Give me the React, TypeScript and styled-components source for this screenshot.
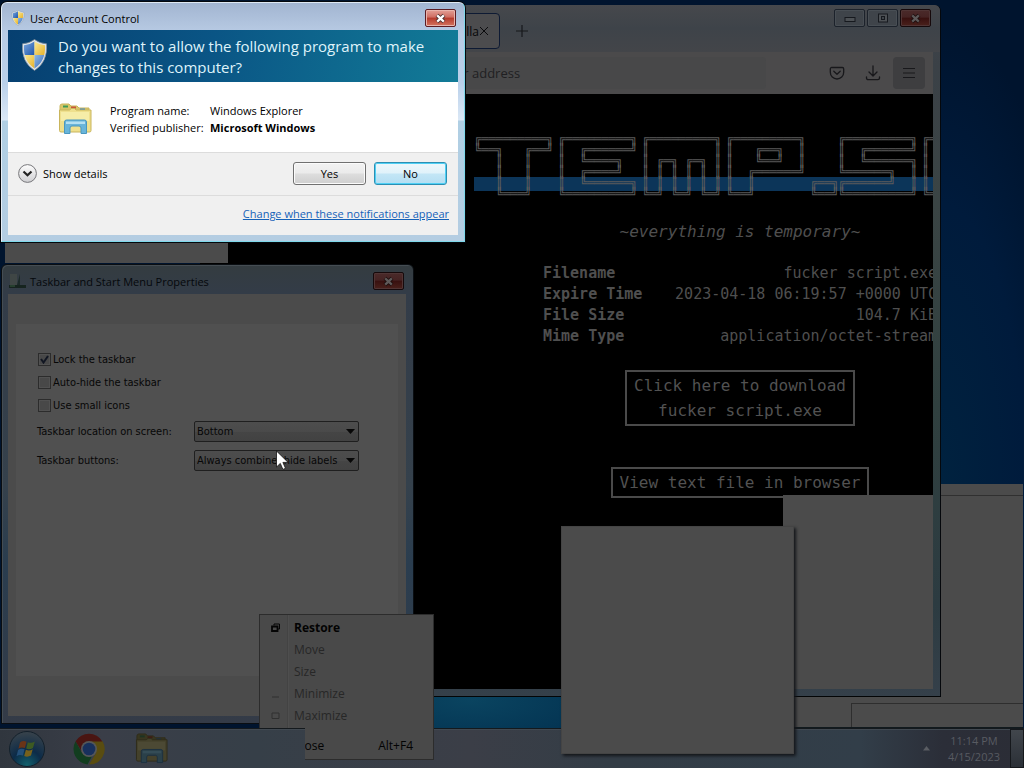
import React from "react";
import styled, { createGlobalStyle, css } from "styled-components";

const ui = `"Open Sans", "Noto Sans", sans-serif`;
const dialogFont = `"DejaVu Sans Condensed", "DejaVu Sans", sans-serif`;
const mono = `"DejaVu Sans Mono", "Liberation Mono", monospace`;

const GlobalStyle = createGlobalStyle`
  * { box-sizing: border-box; }
  body { margin: 0; background: #000; font-family: ${ui}; font-size: 11px; color: #000; }
  button, select, input { font: inherit; margin: 0; padding: 0; }
`;

const Desktop = styled.div`
  position: relative;
  display: flex;
  flex-direction: column;
  justify-content: flex-end;
  min-height: 100vh;
  overflow: hidden;
  background:
    radial-gradient(ellipse 180px 60px at 470px 700px, #0a4460, #02304f 90%, transparent) no-repeat,
    radial-gradient(ellipse 140px 460px at 940px 480px, #00223f, #001b3c 60%, transparent) no-repeat,
    #00142e;
`;

/* ---------- shared window parts ---------- */

const CaptionButton = styled.button<{ $tone: "live" | "dim" | "plain" }>`
  display: grid;
  place-items: center;
  width: 31px;
  height: 18px;
  border-radius: 2px;
  ${(p) =>
    p.$tone === "live" &&
    css`
      border: 1px solid #5c1c22;
      background: linear-gradient(#e3a097, #cf6d62 45%, #b43a2c 50%, #d4745f);
      box-shadow: inset 0 0 0 1px #e8b4ac;
    `}
  ${(p) =>
    p.$tone === "dim" &&
    css`
      border: 1px solid #16090b;
      background: linear-gradient(#4a2a2a, #452323 45%, #38100f 50%, #4a211c);
      box-shadow: inset 0 0 0 1px #503434;
    `}
  ${(p) =>
    p.$tone === "plain" &&
    css`
      border: 1px solid #1c222b;
      background: #3f444a;
      box-shadow: inset 0 0 0 1px #484e54;
    `}
`;

const CloseGlyph = ({ fill, edge }: { fill: string; edge: string }) => (
  <svg width="13" height="11" viewBox="0 0 13 11" aria-hidden="true">
    <path d="M3 2.2 10 8.8M10 2.2 3 8.8" stroke={edge} strokeWidth="4" />
    <path d="M3.2 2.4 9.8 8.6M9.8 2.4 3.2 8.6" stroke={fill} strokeWidth="2.2" />
  </svg>
);

/* ---------- background window on the right ---------- */

const BackWindow = styled.div`
  position: absolute;
  top: 484px;
  left: 700px;
  right: 1px;
  height: 244px;
  display: flex;
  flex-direction: column;
  background: #4b4b4b;
  border-bottom: 1px solid #111a1e;
`;
const BackToolbar = styled.div`
  height: 12px;
  border-bottom: 1px solid #303030;
`;
const BackFill = styled.div`
  flex: 1;
`;
const BackStatus = styled.div`
  height: 24px;
  margin-left: 151px;
  border: 1px solid #2e2e2e;
  border-width: 1px 0 0 1px;
`;

/* ---------- browser ---------- */

const Browser = styled.section`
  position: absolute;
  top: 5px;
  left: 200px;
  width: 741px;
  height: 692px;
  display: flex;
  flex-direction: column;
  padding: 0 7px 7px 0;
  border-radius: 0 6px 0 0;
  border-right: 1px solid #05080c;
  border-bottom: 1px solid #030506;
  background: linear-gradient(#41444a 0, #3b4147 60px, #3a4444 200px, #30403f 400px, #2c3b41 600px, #35404a 100%);
`;
const TabStrip = styled.div`
  display: flex;
  align-items: flex-start;
  height: 47px;
  margin-right: -7px;
  padding: 4px 9px 0 60px;
  border-radius: 0 6px 0 0;
  background: linear-gradient(#46484c, #3e4349 50%, #434549);
`;
const Tab = styled.div`
  display: flex;
  align-items: center;
  justify-content: flex-end;
  width: 240px;
  height: 36px;
  margin-top: 4px;
  padding-right: 10px;
  border: 1px solid #0e1a33;
  border-radius: 4px;
  background: #4c4c4e;
  font-size: 12px;
  color: #070709;
`;
const GhostButton = styled.button<{ $active?: boolean }>`
  display: grid;
  place-items: center;
  width: 32px;
  height: 32px;
  border: 0;
  border-radius: 4px;
  background: ${(p) => (p.$active ? "#3e3e40" : "transparent")};
`;
const TabClose = styled.button`
  display: grid;
  place-items: center;
  width: 10px;
  height: 16px;
  border: 0;
  background: none;
`;
const NewTab = styled(GhostButton)`
  margin: 6px 0 0 6px;
`;
const Captions = styled.div`
  display: flex;
  gap: 2px;
  margin-left: auto;
`;
const NavBar = styled.div`
  display: flex;
  align-items: center;
  gap: 4px;
  height: 42px;
  padding-right: 8px;
  background: #4b4a4b;
`;
const Address = styled.input`
  width: 566px;
  height: 32px;
  margin-right: auto;
  padding-left: 175px;
  border: 0;
  border-radius: 4px;
  background: #484849;
  font-size: 13px;
  color: #202022;
  &::placeholder {
    color: #202022;
    opacity: 1;
  }
`;
const Viewport = styled.div`
  position: relative;
  flex: 1;
  overflow: hidden;
  background: #000;
`;
const Page = styled.main`
  display: flex;
  flex-direction: column;
  align-items: center;
  width: 532px;
  margin-left: 274px;
  padding-top: 40px;
  font-family: ${mono};
  color: #4f4f4f;
`;
const Logo = styled.div`
  display: grid;
  grid-template-columns: repeat(4, 84px) 28px 84px 84px;
  align-self: stretch;
  background: linear-gradient(#0c3559, #0c3559) 0 43px / 100% 14px no-repeat;
`;
const LogoLetter = styled.pre`
  margin: 0;
  font-family: ${mono};
  font-size: 12px;
  line-height: 11px;
  color: #5c5c5c;
`;
const Tagline = styled.p`
  margin: 20px 0 19px;
  font-size: 16px;
  font-style: italic;
  line-height: 24px;
`;
const Details = styled.table`
  width: 394px;
  border-collapse: collapse;
  font-size: 15px;
  line-height: 21px;
  th {
    padding: 0;
    text-align: left;
    white-space: nowrap;
  }
  td {
    padding: 0;
    text-align: right;
    white-space: nowrap;
  }
`;
const PageButton = styled.button`
  margin-top: 23px;
  padding: 1px 7px;
  border: 2px solid #4a4a4a;
  background: #000;
  color: #525252;
  font-size: 16px;
  line-height: 25px;
  & + & {
    margin-top: 41px;
  }
`;
const GreyPane = styled.div`
  position: absolute;
  right: 0;
  bottom: 0;
  width: 150px;
  height: 194px;
  background: #4b4b4b;
`;

const LOGO = [
  ["╔═════════╗", "╚══╗   ╔══╝", "   ║   ║", "   ║   ║", "   ║   ║", "   ╚═══╝"],
  ["╔═════════╗", "║  ╔══════╝", "║  ╚════╗", "║  ╔════╝", "║  ╚══════╗", "╚═════════╝"],
  ["╔═════════╗", "║         ║", "║ ╔═╗ ╔═╗ ║", "║ ║ ║ ║ ║ ║", "║ ║ ║ ║ ║ ║", "╚═╝ ╚═╝ ╚═╝"],
  ["╔═════════╗", "║   ╔══╗  ║", "║   ╚══╝  ║", "║  ╔══════╝", "║  ║", "╚══╝"],
  ["", "", "", "", "╔══╗", "╚══╝"],
  ["╔═════════╗", "║  ╔══════╝", "║  ╚══════╗", "╚══════╗  ║", "╔══════╝  ║", "╚═════════╝"],
  ["╔══╗   ╔══╗", "║  ║   ║  ║", "║  ╚═══╝  ║", "║  ╔═══╗  ║", "║  ║   ║  ║", "╚══╝   ╚══╝"],
];

const DETAILS = [
  ["Filename", "fucker script.exe"],
  ["Expire Time", "2023-04-18 06:19:57 +0000 UTC"],
  ["File Size", "104.7 KiB"],
  ["Mime Type", "application/octet-stream"],
];

const BrowserWindow = () => (
  <Browser>
    <TabStrip>
      <Tab>
        Mozilla
        <TabClose aria-label="Close tab">
          <svg width="10" height="10" viewBox="0 0 10 10">
            <path d="M1 1l8 8M9 1l-8 8" stroke="#0b0b0d" />
          </svg>
        </TabClose>
      </Tab>
      <NewTab aria-label="New tab">
        <svg width="12" height="12" viewBox="0 0 12 12">
          <path d="M6 0v12M0 6h12" stroke="#17181b" strokeWidth="1.2" />
        </svg>
      </NewTab>
      <Captions>
        <CaptionButton $tone="plain" aria-label="Minimize">
          <svg width="12" height="10" viewBox="0 0 12 10">
            <rect x="1" y="4.5" width="10" height="4" fill="#4d5155" stroke="#16191e" />
          </svg>
        </CaptionButton>
        <CaptionButton $tone="plain" aria-label="Maximize">
          <svg width="12" height="10" viewBox="0 0 12 10">
            <rect x="1.5" y="1" width="9" height="8" fill="#4d5155" stroke="#16191e" />
            <rect x="4.5" y="3.5" width="3" height="3" fill="#3f444a" stroke="#16191e" />
          </svg>
        </CaptionButton>
        <CaptionButton $tone="dim" aria-label="Close">
          <CloseGlyph fill="#5c5858" edge="#1d0e0e" />
        </CaptionButton>
      </Captions>
    </TabStrip>
    <NavBar>
      <Address aria-label="Address" placeholder="Search or enter address" />
      <GhostButton aria-label="Save to Pocket">
        <svg width="16" height="16" viewBox="0 0 16 16" fill="none" stroke="#18181b" strokeWidth="1.3">
          <path d="M2.7 2.5h10.6a1.4 1.4 0 0 1 1.4 1.4v3.4a6.7 6.7 0 0 1-13.4 0V3.900A1.400 1.400 0 0 1 2.700 2.500z" />
          <path d="M4.800 6.300 8 9.300l3.200-3" strokeLinecap="round" strokeLinejoin="round" />
        </svg>
      </GhostButton>
      <GhostButton aria-label="Downloads">
        <svg width="16" height="16" viewBox="0 0 16 16" fill="none" stroke="#18181b" strokeWidth="1.3" strokeLinecap="round" strokeLinejoin="round">
          <path d="M8 1v9.500M4 7l4 4 4-4M1.500 12v1a1.700 1.700 0 0 0 1.700 1.700h9.600a1.700 1.700 0 0 0 1.700-1.700v-1" />
        </svg>
      </GhostButton>
      <GhostButton $active aria-label="Menu">
        <svg width="14" height="14" viewBox="0 0 14 14" stroke="#18181b">
          <path d="M1 2.500h12M1 7h12M1 11.500h12" />
        </svg>
      </GhostButton>
    </NavBar>
    <Viewport>
      <Page>
        <Logo>
          {LOGO.map((rows, i) => (
            <LogoLetter key={i}>{rows.join("\n")}</LogoLetter>
          ))}
        </Logo>
        <Tagline>~everything is temporary~</Tagline>
        <Details>
          <tbody>
            {DETAILS.map(([name, value]) => (
              <tr key={name}>
                <th scope="row">{name}</th>
                <td>{value}</td>
              </tr>
            ))}
          </tbody>
        </Details>
        <PageButton>
          Click here to download
          <br />
          fucker script.exe
        </PageButton>
        <PageButton>View text file in browser</PageButton>
      </Page>
      <GreyPane />
    </Viewport>
  </Browser>
);

/* ---------- leftover panels ---------- */

const Strip = styled.div`
  position: absolute;
  top: 240px;
  left: 5px;
  width: 223px;
  height: 23px;
  background: #4b4b4b;
`;
const BlankPopup = styled.div`
  position: absolute;
  top: 526px;
  left: 561px;
  width: 233px;
  height: 228px;
  border: 1px solid #444;
  background: #4b4b4b;
  box-shadow: 2px 2px 3px #14161a;
`;

/* ---------- taskbar properties ---------- */

const Properties = styled.section`
  position: absolute;
  top: 264px;
  left: 1px;
  width: 413px;
  height: 460px;
  display: flex;
  flex-direction: column;
  padding: 0 7px 7px 6px;
  border: 1px solid #0a0e12;
  border-radius: 6px 6px 0 0;
  background: linear-gradient(#343c40, #333c48 30px, #35414c 220px, #2a3d4f 300px, #343b47);
  box-shadow: inset 1px 1px 0 #454d53;
  font-family: ${dialogFont};
  color: #070707;
`;
const PropTitle = styled.header`
  display: flex;
  align-items: center;
  gap: 4px;
  height: 29px;
  padding: 3px 2px 0 1px;
  font-family: ${ui};
  color: #05080c;
  button {
    margin-left: auto;
  }
`;
const PropBody = styled.div`
  flex: 1;
  display: flex;
  padding: 30px 8px 40px;
  background: #4b4b4b;
`;
const PropPanel = styled.form`
  flex: 1;
  padding: 24px 21px;
  background: #505050;
`;
const CheckRow = styled.label`
  display: flex;
  align-items: center;
  gap: 2px;
  height: 23px;
  padding-left: 1px;
`;
const Check = styled.input`
  appearance: none;
  width: 13px;
  height: 13px;
  border: 1px solid #2c2c2c;
  background: #484848;
  box-shadow: inset 0 0 0 1px #515151;
  &:checked {
    background: url("data:image/svg+xml,%3Csvg xmlns='http://www.w3.org/2000/svg' viewBox='0 0 11 11'%3E%3Cpath d='M2 5l2.500 3.500L9 2' fill='none' stroke='%23111622' stroke-width='2'/%3E%3C/svg%3E")
      #484848;
  }
`;
const SelectRow = styled.div`
  display: flex;
  align-items: center;
  height: 29px;
  label {
    width: 157px;
  }
`;
const SelectBox = styled.div`
  position: relative;
  display: flex;
  width: 165px;
  svg {
    position: absolute;
    top: 8px;
    right: 4px;
    pointer-events: none;
  }
`;
const Select = styled.select`
  appearance: none;
  width: 100%;
  height: 21px;
  padding-left: 2px;
  border: 1px solid #1f1f1f;
  border-radius: 2px;
  background: linear-gradient(#4d4d4d, #4a4a4a 50%, #454545 52%, #424242);
  color: #070707;
`;

const LabelledSelect = ({ id, label, value }: { id: string; label: string; value: string }) => (
  <SelectRow>
    <label htmlFor={id}>{label}</label>
    <SelectBox>
      <Select id={id}>
        <option>{value}</option>
      </Select>
      <svg width="9" height="5" viewBox="0 0 9 5">
        <path d="M0 0h9L4.500 5z" fill="#070707" />
      </svg>
    </SelectBox>
  </SelectRow>
);

const PropertiesWindow = () => (
  <Properties>
    <PropTitle>
      <svg width="17" height="16" viewBox="0 0 17 16" aria-hidden="true">
        <path d="M1 1h7v11H1z" fill="#3f4645" />
        <path d="M8 12 11 1v11z" fill="#1c2a29" />
        <path d="M0 12h17v3H0z" fill="#16241f" />
        <path d="M1 12h5v2H1z" fill="#27402f" />
      </svg>
      Taskbar and Start Menu Properties
      <CaptionButton $tone="dim" aria-label="Close">
        <CloseGlyph fill="#5f5a5a" edge="#1d0e0e" />
      </CaptionButton>
    </PropTitle>
    <PropBody>
      <PropPanel>
        <CheckRow>
          <Check type="checkbox" defaultChecked />
          Lock the taskbar
        </CheckRow>
        <CheckRow>
          <Check type="checkbox" />
          Auto-hide the taskbar
        </CheckRow>
        <CheckRow>
          <Check type="checkbox" />
          Use small icons
        </CheckRow>
        <LabelledSelect id="location" label="Taskbar location on screen:" value="Bottom" />
        <LabelledSelect id="buttons" label="Taskbar buttons:" value="Always combine, hide labels" />
      </PropPanel>
    </PropBody>
  </Properties>
);

/* ---------- taskbar ---------- */

const Taskbar = styled.footer`
  position: relative;
  display: flex;
  align-items: center;
  height: 40px;
  border-top: 1px solid #14191d;
  box-shadow: inset 0 1px 0 #414951;
  background: linear-gradient(90deg, #30363e, #3a3e48 10%, #363f48 25%, #3b3e47 46%, #333d46 60%, #323e49 84%, #2b2e38 92%, #2b2d36);
`;
const TaskButton = styled.button`
  display: grid;
  place-items: center;
  width: 62px;
  height: 38px;
  border: 0;
  background: none;
  &:first-child {
    width: 54px;
    margin-right: 4px;
  }
`;
const Tray = styled.div`
  display: flex;
  align-items: center;
  gap: 14px;
  height: 100%;
  margin-left: auto;
`;
const Clock = styled.time`
  width: 60px;
  text-align: center;
  line-height: 16px;
  color: #585b62;
`;
const ShowDesktop = styled.button`
  width: 14px;
  height: 100%;
  margin-left: -8px;
  border: 1px solid #15181c;
  background: linear-gradient(#41464c, #2b3037);
`;

const FolderIcon = ({ size, dim }: { size: number; dim?: boolean }) => {
  const c = dim
    ? { back: "#38361f", mid: "#44412b", front: "#4c4934", edge: "#2f2c1b", stand: "#2a4049", hi: "#344c56" }
    : { back: "#d9c76a", mid: "#efe08d", front: "#f6eda8", edge: "#c9b55c", stand: "#69b5da", hi: "#b4e0f2" };
  return (
    <svg width={size} height={size} viewBox="0 0 34 34" aria-hidden="true">
      <path d="M2 4q0-2 2-2h7l2 2h6l2 2h10v4H2z" fill={c.back} stroke={c.edge} />
      <path d="M5 3.500h5v2H5z" fill={dim ? "#1d3322" : "#3c9a55"} />
      <path d="M13 4.500h5v2h-5z" fill={dim ? "#3f1c14" : "#c8573a"} />
      <path d="M22 6.500h5v2h-5z" fill={dim ? "#1c2f42" : "#3f86c8"} />
      <path d="M1.500 8h10l2-1.500h3L18 8h15v20.500q0 1.500-1.500 1.500H3q-1.500 0-1.500-1.500z" fill={c.mid} stroke={c.edge} />
      <path d="M3 10h28v9H3z" fill={c.front} />
      <path d="M6.500 20q0-2 2-2h18q2 0 2 2v11.500h-5.500V26q0-2-2-2h-7q-2 0-2 2v5.500H6.500z" fill={c.stand} stroke={dim ? "#1d3140" : "#4a97bf"} />
      <path d="M8 19.500h19v2.500H8z" fill={c.hi} />
    </svg>
  );
};

const TaskbarView = () => (
  <Taskbar>
    <TaskButton aria-label="Start">
      <svg width="38" height="38" viewBox="0 0 38 38">
        <defs>
          <radialGradient id="orb" cx=".5" cy=".95" r=".95">
            <stop offset="0" stopColor="#12606c" />
            <stop offset=".45" stopColor="#0c2b48" />
            <stop offset="1" stopColor="#39434b" />
          </radialGradient>
        </defs>
        <circle cx="19" cy="19" r="17.500" fill="url(#orb)" stroke="#13202b" />
        <path d="M12 12.500q3-2.500 6.500-.8l-1.600 6.400q-3.300-1.600-6.500.6z" fill="#6a3417" />
        <path d="M19.800 12.200q3.400 1.500 7-.6l-1.800 6.400q-3.400 2-6.800.6z" fill="#3d5a22" />
        <path d="M10.100 20q3-2.300 6.500-.7l-1.700 6.300q-3.200-1.500-6.400.6z" fill="#234f78" />
        <path d="M17.900 19.700q3.400 1.600 6.800-.5L23 25.600q-3.500 2-6.800.5z" fill="#77611c" />
      </svg>
    </TaskButton>
    <TaskButton aria-label="Google Chrome">
      <svg width="32" height="32" viewBox="0 0 32 32">
        <path d="M16 8h13.400A15.500 15.500 0 0 1 16 31.500L23 20z" fill="#594c10" />
        <path d="M2.600 8.200 9.100 20 16 23.500l3-.3-4.500 8.200A15.500 15.500 0 0 1 2.600 8.200z" fill="#123d1f" />
        <path d="M16 8.500h13.300A15.500 15.500 0 0 0 2.600 8.200L9 19z" fill="#4a1512" />
        <circle cx="16" cy="16" r="8" fill="#555759" />
        <circle cx="16" cy="16" r="6.300" fill="#18305c" />
      </svg>
    </TaskButton>
    <TaskButton aria-label="Windows Explorer">
      <FolderIcon size={33} dim />
    </TaskButton>
    <Tray>
      <svg width="7" height="5" viewBox="0 0 7 5" aria-hidden="true">
        <path d="M3.500 0 7 4.500H0z" fill="#5a5d63" />
      </svg>
      <Clock>
        11:14 PM
        <br />
        4/15/2023
      </Clock>
      <ShowDesktop aria-label="Show desktop" />
    </Tray>
  </Taskbar>
);

/* ---------- window menu ---------- */

const Menu = styled.div`
  position: absolute;
  top: 614px;
  left: 259px;
  width: 175px;
  padding: 1px 2px 3px;
  border: 1px solid #2c2c2c;
  background: linear-gradient(90deg, transparent 27px, #434343 27px, #434343 28px, #4e4e4e 28px, #4e4e4e 29px, transparent 29px) #494949;
  clip-path: polygon(0 0, 100% 0, 100% 100%, 46px 100%, 46px 114px, 0 114px);
`;
const MenuItem = styled.button<{ $kind?: "strong" | "off" }>`
  display: grid;
  grid-template-columns: 9px 1fr auto;
  column-gap: 14px;
  align-items: center;
  width: 100%;
  height: 22px;
  padding: 0 18px 0 9px;
  border: 0;
  background: none;
  text-align: left;
  font-size: 12px;
  font-weight: ${(p) => (p.$kind === "strong" ? 700 : 400)};
  color: ${(p) => (p.$kind === "off" ? "#272727" : "#030303")};
`;
const MenuRule = styled.hr`
  height: 1px;
  margin: 3px 0 4px 28px;
  border: 0;
  background: #494949;
`;

const WindowMenu = () => (
  <Menu>
    <MenuItem $kind="strong">
      <svg width="9" height="9" viewBox="0 0 9 9" fill="none" stroke="#050505">
        <path d="M3 2.500V1h5.500v5H7" />
        <path d="M1 3.500h5.500V8H1z" strokeWidth="1.800" />
      </svg>
      Restore
    </MenuItem>
    <MenuItem $kind="off">
      <span />
      Move
    </MenuItem>
    <MenuItem $kind="off">
      <span />
      Size
    </MenuItem>
    <MenuItem $kind="off">
      <svg width="9" height="9" viewBox="0 0 9 9">
        <path d="M1 8h7" stroke="#303030" />
      </svg>
      Minimize
    </MenuItem>
    <MenuItem $kind="off">
      <svg width="9" height="9" viewBox="0 0 9 9">
        <path d="M1 2h7v5.500H1z" fill="none" stroke="#303030" />
      </svg>
      Maximize
    </MenuItem>
    <MenuRule />
    <MenuItem>
      <span />
      Close
      <span>Alt+F4</span>
    </MenuItem>
  </Menu>
);

/* ---------- user account control ---------- */

const Uac = styled.section`
  position: absolute;
  top: 2px;
  left: 1px;
  width: 464px;
  height: 240px;
  display: flex;
  flex-direction: column;
  padding: 0 6px 6px;
  border: 1px solid #7fd8ea;
  border-top-color: #dfe9f3;
  border-left-color: #e6eef6;
  border-radius: 6px 6px 0 0;
  background: linear-gradient(#a2b5d1, #b8cbe4 30px, #b9d0ea 80px, #dbe8f6 117px, #b0cfe4 118px, #b4cde2);
  box-shadow: 0 0 0 1px #05080c;
`;
const UacTitle = styled.header`
  display: flex;
  align-items: center;
  gap: 5px;
  height: 27px;
  padding: 3px 2px 0 3px;
  button {
    margin-left: auto;
  }
`;
const Banner = styled.div`
  display: flex;
  gap: 10px;
  height: 52px;
  padding: 6px 13px;
  background: linear-gradient(100deg, #063f70, #0a5585 45%, #127b97);
  h1 {
    margin: 0;
    font-size: 15px;
    font-weight: 400;
    line-height: 21px;
    color: #dff3fa;
  }
  svg {
    flex: none;
    margin-top: 3px;
  }
`;
const Program = styled.div`
  display: flex;
  align-items: center;
  gap: 18px;
  height: 70px;
  padding: 4px 50px 0;
  background: #fff;
  dl {
    display: grid;
    grid-template-columns: 100px 1fr;
    margin: 0;
    line-height: 17px;
  }
  dd {
    margin: 0;
  }
`;
const Actions = styled.div`
  display: flex;
  align-items: center;
  gap: 8px;
  height: 44px;
  padding: 0 11px 2px 10px;
  border-top: 1px solid #dcdcdc;
  border-bottom: 1px solid #dcdcdc;
  background: #f0f0f0;
`;
const DetailsToggle = styled.button`
  display: flex;
  align-items: center;
  gap: 6px;
  margin-right: auto;
  border: 0;
  background: none;
`;
const Push = styled.button<{ $focus?: boolean }>`
  width: 73px;
  height: 23px;
  border: 1px solid ${(p) => (p.$focus ? "#2c8fb3" : "#707070")};
  border-radius: 3px;
  background: ${(p) =>
    p.$focus
      ? "linear-gradient(#eef7fb, #e0f2fa 48%, #c3e6f6 52%, #b4def2)"
      : "linear-gradient(#f2f2f2, #ebebeb 48%, #dddddd 52%, #cfcfcf)"};
  box-shadow: inset 0 0 0 1px ${(p) => (p.$focus ? "#4fd0f5" : "#fbfbfb")};
`;
const UacFooter = styled.div`
  flex: 1;
  display: flex;
  align-items: center;
  justify-content: flex-end;
  padding: 0 9px 4px 0;
  background: #f0f0f0;
  a {
    color: #1561b8;
  }
`;

const Shield = ({ width, height }: { width: number; height: number }) => (
  <svg width={width} height={height} viewBox="0 0 26 32" aria-hidden="true">
    <defs>
      <clipPath id={`shield${width}`}>
        <path d="M13 2.500Q8 6 2.500 6.300 1.500 22 13 29.500 24.500 22 23.500 6.300 18 6 13 2.500z" />
      </clipPath>
      <linearGradient id={`blue${width}`} x1="0" y1="0" x2="1" y2="1">
        <stop offset="0" stopColor="#8fb8e6" />
        <stop offset="1" stopColor="#1e56ad" />
      </linearGradient>
      <linearGradient id={`gold${width}`} x1="0" y1="0" x2="1" y2="1">
        <stop offset="0" stopColor="#fdf0a0" />
        <stop offset="1" stopColor="#e3ab1f" />
      </linearGradient>
    </defs>
    <path d="M13 .5Q8 4.500 1 4.800-.5 23 13 31.500 26.500 23 25 4.800 18 4.500 13 .5z" fill="#dfe5ea" stroke="#7d8a96" strokeWidth=".7" />
    <g clipPath={`url(#shield${width})`}>
      <path d="M0 0h13v16H0z" fill={`url(#blue${width})`} />
      <path d="M13 0h13v16H13z" fill={`url(#gold${width})`} />
      <path d="M0 16h13v16H0z" fill={`url(#gold${width})`} />
      <path d="M13 16h13v16H13z" fill={`url(#blue${width})`} />
    </g>
  </svg>
);

const UacDialog = () => (
  <Uac role="dialog" aria-label="User Account Control">
    <UacTitle>
      <Shield width={14} height={16} />
      User Account Control
      <CaptionButton $tone="live" aria-label="Close">
        <CloseGlyph fill="#fff" edge="#4b3030" />
      </CaptionButton>
    </UacTitle>
    <Banner>
      <Shield width={27} height={32} />
      <h1>Do you want to allow the following program to make changes to this computer?</h1>
    </Banner>
    <Program>
      <FolderIcon size={34} />
      <dl>
        <dt>Program name:</dt>
        <dd>Windows Explorer</dd>
        <dt>Verified publisher:</dt>
        <dd>
          <b>Microsoft Windows</b>
        </dd>
      </dl>
    </Program>
    <Actions>
      <DetailsToggle>
        <svg width="19" height="19" viewBox="0 0 19 19">
          <defs>
            <linearGradient id="chev" x1="0" y1="0" x2="0" y2="1">
              <stop offset="0" stopColor="#fdfdfd" />
              <stop offset="1" stopColor="#cfcfd2" />
            </linearGradient>
          </defs>
          <circle cx="9.500" cy="9.500" r="8.900" fill="url(#chev)" stroke="#77777b" />
          <path d="M5.500 7.500 9.500 11.300l4-3.800" fill="none" stroke="#222" strokeWidth="2.200" />
        </svg>
        Show details
      </DetailsToggle>
      <Push>Yes</Push>
      <Push $focus>No</Push>
    </Actions>
    <UacFooter>
      <a href="#notifications">Change when these notifications appear</a>
    </UacFooter>
  </Uac>
);

const Cursor = styled.svg`
  position: absolute;
  top: 450px;
  left: 276px;
  pointer-events: none;
`;

export default function App() {
  return (
    <Desktop>
      <GlobalStyle />
      <BackWindow>
        <BackToolbar />
        <BackFill />
        <BackStatus />
      </BackWindow>
      <BrowserWindow />
      <Strip />
      <PropertiesWindow />
      <TaskbarView />
      <BlankPopup />
      <WindowMenu />
      <UacDialog />
      <Cursor width="13" height="21" viewBox="0 0 13 21" aria-hidden="true">
        <path d="M.5 1v16l3.800-3.600 2.600 6 2.600-1.100-2.600-5.900h5.200z" fill="#fff" stroke="#111" strokeWidth=".8" />
      </Cursor>
    </Desktop>
  );
}
